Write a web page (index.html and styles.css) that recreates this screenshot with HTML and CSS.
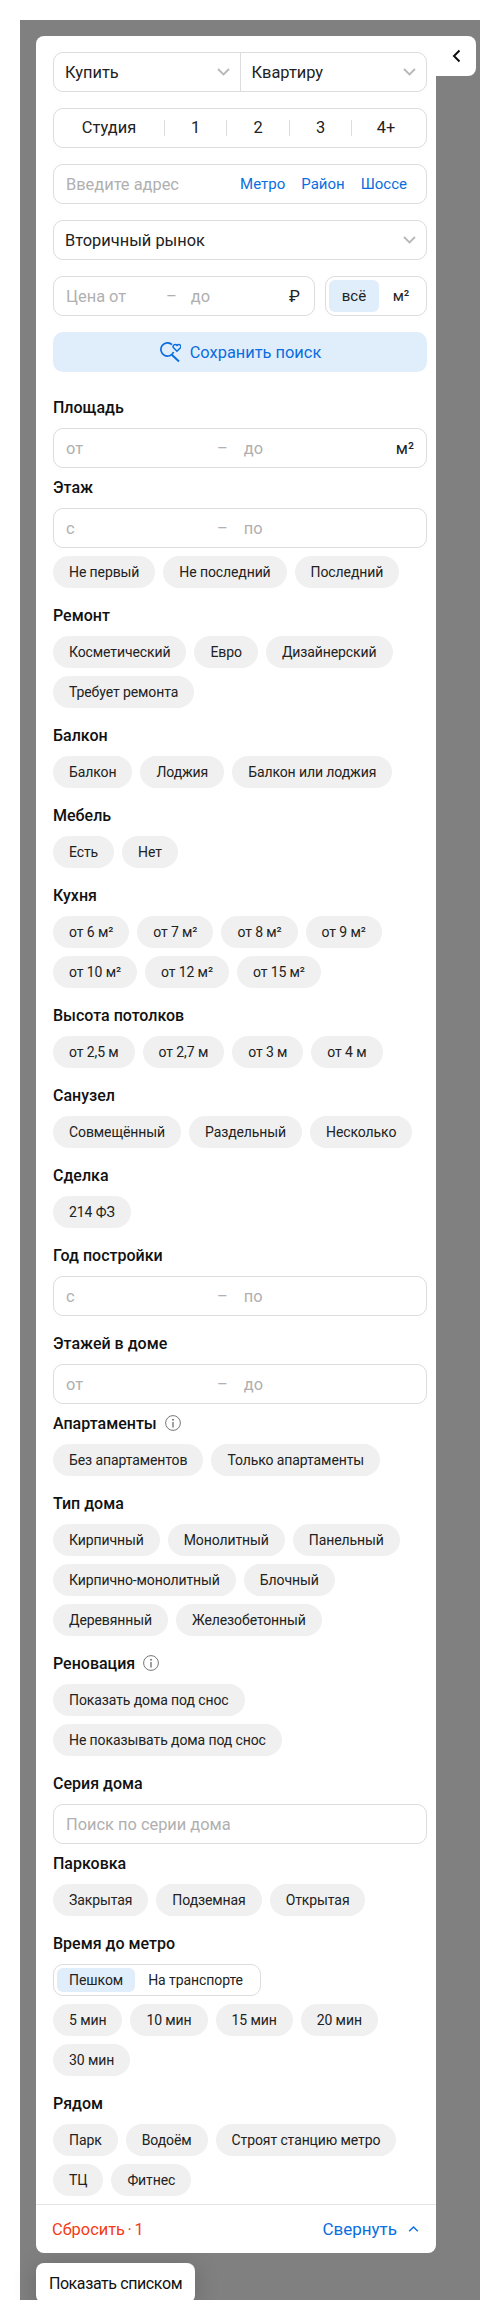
FILE: index.html
```html
<!doctype html>
<html lang="ru">
  <head>
    <meta charset="UTF-8" />
    <title>Фильтры</title>
    <link rel="stylesheet" href="styles.css">
  </head>
  <body>
    <svg class="sprite" width="0" height="0">
      <symbol id="chevron" viewBox="0 0 13 8"><path d="M1 1l5.5 5.5L12 1" fill="none" stroke="currentColor" stroke-width="1.8"/></symbol>
      <symbol id="info" viewBox="0 0 16 16">
        <circle cx="8" cy="8" r="7.4" fill="none" stroke="currentColor" stroke-width="1"/>
        <circle cx="8" cy="4.7" r="1" fill="currentColor"/>
        <path d="M8 7v5.5" fill="none" stroke="currentColor" stroke-width="1.4"/>
      </symbol>
    </svg>

    <div class="backdrop">
      <div class="panel">
        <button class="tab-close">
          <svg width="9" height="14" viewBox="0 0 9 14"><path d="M7.5 1.5 2 7l5.5 5.5" fill="none" stroke="#111" stroke-width="2"/></svg>
        </button>

        <div class="panel-body">
          <div class="box split">
            <div class="select">Купить<svg class="chevron"><use href="#chevron"/></svg></div>
            <div class="select">Квартиру<svg class="chevron"><use href="#chevron"/></svg></div>
          </div>

          <div class="box rooms">
            <span class="room">Студия</span>
            <span class="room">1</span>
            <span class="room">2</span>
            <span class="room">3</span>
            <span class="room">4+</span>
          </div>

          <div class="box address">
            <span class="placeholder">Введите адрес</span>
            <span class="links">
              <a>Метро</a>
              <a>Район</a>
              <a>Шоссе</a>
            </span>
          </div>

          <div class="box">
            <div class="select">Вторичный рынок<svg class="chevron"><use href="#chevron"/></svg></div>
          </div>

          <div class="price-row">
            <div class="box price">
              <span class="placeholder price-from">Цена от</span>
              <span class="dash">–</span>
              <span class="placeholder price-to">до</span>
              <span class="currency">₽</span>
            </div>
            <div class="box unit">
              <span class="unit-item active">всё</span>
              <span class="unit-item">м²</span>
            </div>
          </div>

          <button class="save">
            <svg width="22" height="20" viewBox="0 0 22 20" fill="none" stroke="#0a6ee0" stroke-width="1.7">
              <path d="M13 2.6A6.6 6.6 0 1 0 14.6 10"/>
              <path d="M12.8 12.8 20 19.5" stroke-width="2"/>
              <path d="M18 9.2 14.6 5.8C13 3.8 15.8 1.2 18 3.4 20.2 1.2 23 3.8 21.4 5.8Z" stroke-width="1.5"/>
            </svg>
            Сохранить поиск
          </button>

          <div class="section first">
            <h3>Площадь</h3>
            <div class="box range">
              <span class="range-part">от</span><span class="dash">–</span><span class="range-part">до</span>
              <span class="range-unit">м²</span>
            </div>
          </div>

          <div class="section">
            <h3>Этаж</h3>
            <div class="box range">
              <span class="range-part">с</span><span class="dash">–</span><span class="range-part">по</span>
            </div>
            <div class="chips chips-top">
              <span class="chip">Не первый</span>
              <span class="chip">Не последний</span>
              <span class="chip">Последний</span>
            </div>
          </div>

          <div class="section">
            <h3>Ремонт</h3>
            <div class="chips">
              <span class="chip">Косметический</span>
              <span class="chip">Евро</span>
              <span class="chip">Дизайнерский</span>
              <span class="chip">Требует ремонта</span>
            </div>
          </div>

          <div class="section">
            <h3>Балкон</h3>
            <div class="chips">
              <span class="chip">Балкон</span>
              <span class="chip">Лоджия</span>
              <span class="chip">Балкон или лоджия</span>
            </div>
          </div>

          <div class="section">
            <h3>Мебель</h3>
            <div class="chips">
              <span class="chip">Есть</span>
              <span class="chip">Нет</span>
            </div>
          </div>

          <div class="section">
            <h3>Кухня</h3>
            <div class="chips">
              <span class="chip">от 6 м²</span>
              <span class="chip">от 7 м²</span>
              <span class="chip">от 8 м²</span>
              <span class="chip">от 9 м²</span>
              <span class="chip">от 10 м²</span>
              <span class="chip">от 12 м²</span>
              <span class="chip">от 15 м²</span>
            </div>
          </div>

          <div class="section">
            <h3>Высота потолков</h3>
            <div class="chips">
              <span class="chip">от 2,5 м</span>
              <span class="chip">от 2,7 м</span>
              <span class="chip">от 3 м</span>
              <span class="chip">от 4 м</span>
            </div>
          </div>

          <div class="section">
            <h3>Санузел</h3>
            <div class="chips">
              <span class="chip">Совмещённый</span>
              <span class="chip">Раздельный</span>
              <span class="chip">Несколько</span>
            </div>
          </div>

          <div class="section">
            <h3>Сделка</h3>
            <div class="chips">
              <span class="chip">214 ФЗ</span>
            </div>
          </div>

          <div class="section">
            <h3>Год постройки</h3>
            <div class="box range">
              <span class="range-part">с</span><span class="dash">–</span><span class="range-part">по</span>
            </div>
          </div>

          <div class="section spaced">
            <h3>Этажей в доме</h3>
            <div class="box range">
              <span class="range-part">от</span><span class="dash">–</span><span class="range-part">до</span>
            </div>
          </div>

          <div class="section">
            <h3>Апартаменты <svg class="info"><use href="#info"/></svg></h3>
            <div class="chips">
              <span class="chip">Без апартаментов</span>
              <span class="chip">Только апартаменты</span>
            </div>
          </div>

          <div class="section">
            <h3>Тип дома</h3>
            <div class="chips">
              <span class="chip">Кирпичный</span>
              <span class="chip">Монолитный</span>
              <span class="chip">Панельный</span>
              <span class="chip">Кирпично-монолитный</span>
              <span class="chip">Блочный</span>
              <span class="chip">Деревянный</span>
              <span class="chip">Железобетонный</span>
            </div>
          </div>

          <div class="section">
            <h3>Реновация <svg class="info"><use href="#info"/></svg></h3>
            <div class="chips">
              <span class="chip">Показать дома под снос</span>
              <span class="chip">Не показывать дома под снос</span>
            </div>
          </div>

          <div class="section">
            <h3>Серия дома</h3>
            <div class="box series"><span class="placeholder">Поиск по серии дома</span></div>
          </div>

          <div class="section">
            <h3>Парковка</h3>
            <div class="chips">
              <span class="chip">Закрытая</span>
              <span class="chip">Подземная</span>
              <span class="chip">Открытая</span>
            </div>
          </div>

          <div class="section">
            <h3>Время до метро</h3>
            <div class="segment">
              <span class="segment-item active">Пешком</span>
              <span class="segment-item">На транспорте</span>
            </div>
            <div class="chips chips-top">
              <span class="chip">5 мин</span>
              <span class="chip">10 мин</span>
              <span class="chip">15 мин</span>
              <span class="chip">20 мин</span>
              <span class="chip">30 мин</span>
            </div>
          </div>

          <div class="section">
            <h3>Рядом</h3>
            <div class="chips">
              <span class="chip">Парк</span>
              <span class="chip">Водоём</span>
              <span class="chip">Строят станцию метро</span>
              <span class="chip">ТЦ</span>
              <span class="chip">Фитнес</span>
            </div>
          </div>
        </div>

        <div class="panel-footer">
          <a class="reset">Сбросить · 1</a>
          <a class="collapse">Свернуть
            <svg width="11" height="8" viewBox="0 0 14 9"><path d="M1.5 7.5 7 2l5.5 5.5" fill="none" stroke="currentColor" stroke-width="1.8"/></svg>
          </a>
        </div>
      </div>

      <button class="show-list">Показать списком</button>
    </div>
  </body>
</html>
```

FILE: styles.css
```css
* {
  margin: 0;
  padding: 0;
  box-sizing: border-box;
  font-family: Roboto, "Noto Sans", sans-serif;
}

html,
body {
  height: 2300px;
  overflow: hidden;
  background-color: white;
}

.sprite {
  position: absolute;
}

.backdrop {
  margin: 20px 20px 0;
  height: 2280px;
  padding: 16px;
  background-color: #808080;
}

.panel {
  position: relative;
  z-index: 1;
  width: 400px;
  background-color: white;
  border-radius: 8px 0 8px 8px;
}

.tab-close {
  position: absolute;
  top: 0;
  left: 400px;
  width: 40px;
  height: 40px;
  display: flex;
  align-items: center;
  justify-content: center;
  background-color: white;
  border: none;
  border-radius: 0 8px 8px 0;
}

.panel-body {
  padding: 16px 9px 0 17px;
}

.box {
  height: 40px;
  margin-bottom: 16px;
  display: flex;
  align-items: center;
  border: 1px solid #dcdcdc;
  border-radius: 10px;
  font-size: 16.4px;
  color: #222;
}

.placeholder,
.range-part {
  color: #b0b0b0;
}

.split .select:first-child {
  border-right: 1px solid #dcdcdc;
}

.select {
  flex: 1;
  height: 100%;
  display: flex;
  align-items: center;
  justify-content: space-between;
  padding: 0 10px 0 11px;
}

.chevron {
  width: 13px;
  height: 8px;
  color: #b8b8b8;
}

.rooms {
  display: grid;
  grid-template-columns: 110px 62px 63px 62px 1fr;
  padding-right: 6px;
}

.room {
  text-align: center;
  border-left: 1px solid #dcdcdc;
  line-height: 16px;
}

.room:first-child {
  border-left: none;
}

.address {
  justify-content: space-between;
  padding: 0 19px 0 12px;
}

.links {
  display: flex;
  gap: 16px;
  font-size: 15px;
  color: #0a6ee0;
}

.price-row {
  display: flex;
  gap: 10px;
}

.price {
  width: 262px;
  padding: 0 12px;
}

.price-from {
  width: 100px;
}

.dash {
  color: #b0b0b0;
}

.price-to {
  margin-left: 14px;
}

.currency {
  margin-left: auto;
  margin-right: 2px;
}

.unit {
  width: 102px;
  padding: 3px;
}

.unit-item {
  flex: 1;
  height: 100%;
  display: flex;
  align-items: center;
  justify-content: center;
  border-radius: 6px;
  font-size: 15px;
}

.unit-item.active {
  flex: 0 0 50px;
  background-color: #e0edfb;
}

.save {
  width: 100%;
  height: 40px;
  display: flex;
  align-items: center;
  justify-content: center;
  gap: 9px;
  background-color: #e0edfb;
  border: none;
  border-radius: 10px;
  font-size: 16.4px;
  color: #0a6ee0;
}

.section {
  padding-top: 8px;
}

.section.first {
  padding-top: 24px;
}

.section.spaced {
  padding-top: 16px;
}

.section h3 {
  height: 22px;
  margin-bottom: 10px;
  display: flex;
  align-items: center;
  gap: 4px;
  font-size: 16px;
  font-weight: 500;
  color: #111;
}

.section .box {
  margin-bottom: 0;
}

.info {
  width: 16px;
  height: 16px;
  margin-left: 4px;
  color: #777;
}

.range {
  padding: 0 12px;
}

.range-part {
  flex: 1;
}

.range .dash {
  margin-right: 16px;
}

.range-part:first-child {
  flex: 0 0 151px;
}

.series {
  padding: 0 12px;
}

.chips {
  display: flex;
  flex-wrap: wrap;
  gap: 8px;
  margin-bottom: 8px;
}

.chips-top {
  margin-top: 8px;
}

.chip {
  height: 32px;
  padding: 0 16px;
  display: flex;
  align-items: center;
  background-color: #f0f0f0;
  border-radius: 16px;
  font-size: 14px;
  letter-spacing: -0.1px;
  color: #222;
}

.segment {
  width: 208px;
  height: 32px;
  padding: 3px;
  display: flex;
  border: 1px solid #dcdcdc;
  border-radius: 10px;
  font-size: 14px;
  letter-spacing: -0.07px;
  color: #222;
  white-space: nowrap;
}

.segment-item {
  display: flex;
  align-items: center;
  padding: 0 12px 0 13px;
  border-radius: 6px;
}

.segment-item.active {
  flex: 0 0 78px;
  padding: 0 12px;
  background-color: #e0edfb;
}

.panel-footer {
  height: 49px;
  display: flex;
  align-items: center;
  justify-content: space-between;
  padding: 0 17px 0 16px;
  border-top: 1px solid #e4e4e4;
  font-size: 17px;
}

.reset {
  font-size: 16.4px;
  word-spacing: -1.5px;
  color: #f53a14;
}

.collapse {
  display: flex;
  align-items: center;
  gap: 11px;
  color: #0a6ee0;
}

.show-list {
  display: block;
  width: 159px;
  height: 40px;
  margin-top: 10px;
  background-color: white;
  border: none;
  border-radius: 8px;
  box-shadow: 0 4px 24px rgba(0, 0, 0, 0.2);
  font-size: 16px;
  letter-spacing: -0.4px;
  color: #111;
}
```
